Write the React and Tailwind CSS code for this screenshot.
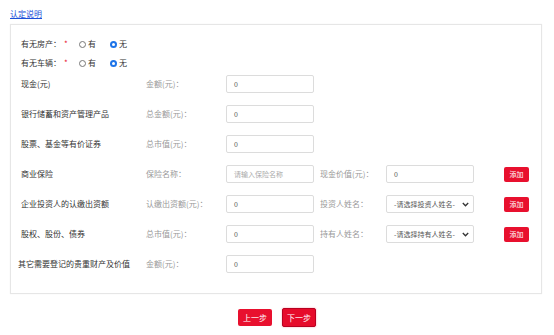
import React from 'react';

const font = { fontFamily: '"Noto Sans CJK SC", "Noto Sans", sans-serif' };

const Radio = ({ checked, label }) => (
  <span className="flex items-center gap-[2px]">
    {checked ? (
      <span className="w-[7px] h-[7px] rounded-full bg-[#1e74e8] flex items-center justify-center">
        <span className="w-[3px] h-[3px] rounded-full bg-white" />
      </span>
    ) : (
      <span className="w-[7px] h-[7px] rounded-full border border-[#777] bg-white" />
    )}
    <span className="text-[#333]">{label}</span>
  </span>
);

const RadioRow = ({ label }) => (
  <div className="flex items-center h-[12px]">
    <span className="w-[43px] text-[#333]">{label}</span>
    <span className="w-[15px] text-[#e8102e]">*</span>
    <div className="flex items-center gap-[14px]">
      <Radio label="有" />
      <Radio checked label="无" />
    </div>
  </div>
);

const Input = ({ value, placeholder }) => (
  <div className="w-[88px] h-[18px] border border-[#dcdcdc] rounded-[2px] bg-white flex items-center pl-[7px] text-[7px]">
    {value !== undefined ? (
      <span className="text-[#555]">{value}</span>
    ) : (
      <span className="text-[#aaa] whitespace-nowrap">{placeholder}</span>
    )}
  </div>
);

const Select = ({ text }) => (
  <div className="w-[88px] h-[18px] border border-[#dcdcdc] rounded-[2px] bg-white flex items-center justify-between pl-[7px] pr-[4px] text-[7px]">
    <span className="text-[#555] whitespace-nowrap">{text}</span>
    <svg width="7" height="5" viewBox="0 0 7 5">
      <path d="M0.8 1 L3.5 3.8 L6.2 1" fill="none" stroke="#333" strokeWidth="1.3" />
    </svg>
  </div>
);

const AddButton = () => (
  <button className="w-[25px] h-[15px] bg-[#e8102e] text-white rounded-[2px] text-[7px] leading-none">添加</button>
);

const FieldRow = ({ label, sub, value, placeholder, extra }) => (
  <div className="flex items-center h-[18px]">
    <span className="w-[125px] text-[#333] whitespace-nowrap">{label}</span>
    <span className="w-[80px] text-[#999]">{sub}</span>
    <Input value={value} placeholder={placeholder} />
    {extra && (
      <>
        <span className="w-[66px] ml-[6px] text-[#999]">{extra.label}</span>
        {extra.select ? <Select text={extra.select} /> : <Input value={extra.value} />}
        <span className="ml-[30px]">
          <AddButton />
        </span>
      </>
    )}
  </div>
);

export default function App() {
  return (
    <div className="w-[554px] h-[335px] bg-white px-[10px] text-[8px] leading-[12px]" style={font}>
      <div className="h-[24px] pt-[8px]">
        <a href="#" className="text-[#1d4fd8] underline leading-[10px]">认定说明</a>
      </div>
      <div className="w-[532px] h-[270px] border border-[#e6e6e6] shadow-[0_0_1px_#eee] pt-[13px] pl-[10px]">
        <div className="flex flex-col gap-[7px]">
          <RadioRow label="有无房产：" />
          <RadioRow label="有无车辆：" />
        </div>
        <div className="flex flex-col gap-[12px] mt-[6px]">
          <FieldRow label="现金(元)" sub="金额(元)：" value="0" />
          <FieldRow label="银行储蓄和资产管理产品" sub="总金额(元)：" value="0" />
          <FieldRow label="股票、基金等有价证券" sub="总市值(元)：" value="0" />
          <FieldRow
            label="商业保险"
            sub="保险名称："
            placeholder="请输入保险名称"
            extra={{ label: '现金价值(元)：', value: '0' }}
          />
          <FieldRow
            label="企业投资人的认缴出资额"
            sub="认缴出资额(元)："
            value="0"
            extra={{ label: '投资人姓名：', select: '-请选择投资人姓名-' }}
          />
          <FieldRow
            label="股权、股份、债券"
            sub="总市值(元)："
            value="0"
            extra={{ label: '持有人姓名：', select: '-请选择持有人姓名-' }}
          />
          <div className="flex items-center h-[18px]">
            <span className="w-[125px] -ml-[3px] mr-[3px] text-[#333] whitespace-nowrap">其它需要登记的贵重财产及价值</span>
            <span className="w-[80px] text-[#999]">金额(元)：</span>
            <Input value="0" />
          </div>
        </div>
      </div>
      <div className="flex justify-center gap-[10px] mt-[14px]">
        <button className="w-[34px] h-[17px] mt-[1px] bg-[#e8102e] text-white rounded-[2px] text-[8px] leading-none">上一步</button>
        <button className="w-[34px] h-[19px] bg-[#e60b2b] text-white rounded-[2px] text-[8px] leading-none border border-[#b80020] shadow-[0_0_2px_#f59aa6]">下一步</button>
      </div>
    </div>
  );
}
